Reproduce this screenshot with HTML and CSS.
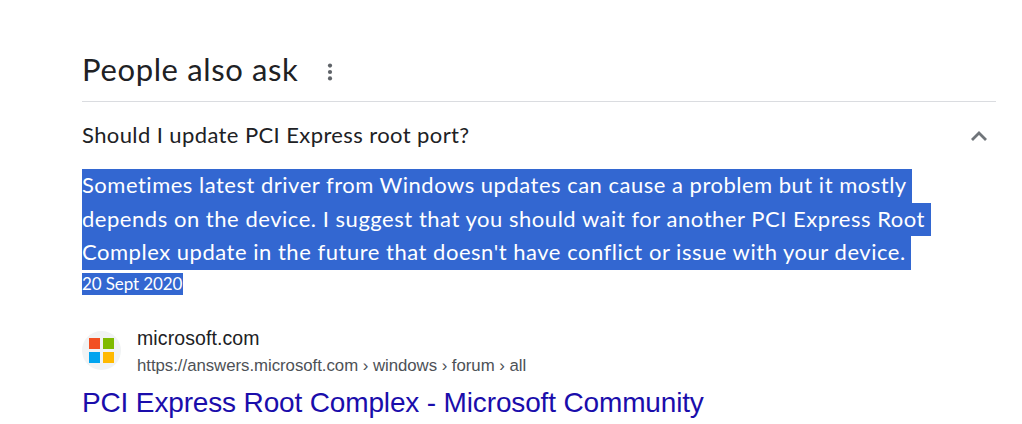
FILE: index.html
```html
<!DOCTYPE html>
<html lang="en">
<head>
<meta charset="utf-8">
<title>People also ask</title>
<link rel="stylesheet" href="styles.css">
</head>
<body>
<main class="panel">
  <header class="heading">
    <h2 class="heading-title">People also ask</h2>
    <svg class="menu-icon" viewBox="0 0 6 18" aria-hidden="true"><circle cx="3" cy="2.6" r="2.1"/><circle cx="3" cy="9" r="2.1"/><circle cx="3" cy="15.4" r="2.1"/></svg>
  </header>
  <div class="question">
    <span class="question-text">Should I update PCI Express root port?</span>
    <svg class="chevron" viewBox="0 0 18 12" aria-hidden="true"><path d="M2 10 9 3l7 7"/></svg>
  </div>
  <div class="answer">
    <div class="line line-first">Sometimes latest driver from Windows updates can cause a problem but it mostly</div>
    <div class="line line-second">depends on the device. I suggest that you should wait for another PCI Express Root</div>
    <div class="line line-third">Complex update in the future that doesn't have conflict or issue with your device.</div>
  </div>
  <div class="date">20 Sept 2020</div>
  <div class="source">
    <svg class="logo" viewBox="0 0 39 39" aria-hidden="true"><circle cx="19.5" cy="19.5" r="19.5" fill="#f1f3f4"/><path fill="#f25022" d="M7 7h11v11H7z"/><path fill="#7fba00" d="M21 7h11v11H21z"/><path fill="#00a4ef" d="M7 21h11v11H7z"/><path fill="#ffb900" d="M21 21h11v11H21z"/></svg>
    <div class="source-text">
      <div class="site">microsoft.com</div>
      <div class="path">https://answers.microsoft.com › windows › forum › all</div>
    </div>
  </div>
  <div class="result">PCI Express Root Complex - Microsoft Community</div>
</main>
</body>
</html>
```
FILE: styles.css
```css
body { margin: 0; background: #fff; color: #202124; overflow: hidden; }
.panel { width: 914px; padding: 42px 0 0 82px; font-family: Lato, sans-serif; white-space: nowrap; }
.heading { display: flex; align-items: flex-start; height: 59px; border-bottom: 1px solid #dadce0; }
.heading-title { margin: 0; width: 245px; font-size: 31px; font-weight: 400; line-height: 54px; letter-spacing: 0.63px; }
.menu-icon { width: 6px; height: 18px; margin-top: 21px; fill: #5f6368; }
.question { display: flex; align-items: center; justify-content: space-between; height: 67px; padding-right: 8px; }
.question-text { padding-bottom: 2px; font-size: 22px; letter-spacing: 0.4px; }
.chevron { width: 18px; height: 12px; fill: none; stroke: #70757a; stroke-width: 2.8; }
.answer { font-size: 22px; line-height: 32.4px; color: #fff; }
.line { height: 33.6px; background: #3367d1; letter-spacing: 0.5px; }
.line-first { width: 829.5px; }
.line-second { width: 848.5px; letter-spacing: 0.53px; }
.line-third { width: 828.5px; letter-spacing: 0.52px; }
.date { width: 101px; height: 22px; margin-top: 3px; background: #3367d1; color: #fff; font-size: 17px; line-height: 22px; letter-spacing: -0.1px; }
.source { display: flex; align-items: center; height: 52px; margin-top: 30px; font-family: "Liberation Sans", Arial, sans-serif; }
.logo { width: 39px; height: 39px; margin-right: 16px; }
.site { font-size: 19.5px; line-height: 26px; letter-spacing: 0.1px; }
.path { padding-top: 2px; margin-bottom: -2px; font-size: 16.8px; line-height: 26px; letter-spacing: -0.03px; color: #4d5156; }
.result { margin-top: 9px; font-family: "Liberation Sans", Arial, sans-serif; font-size: 28px; line-height: 34px; letter-spacing: -0.15px; color: #1a0dab; }
```
